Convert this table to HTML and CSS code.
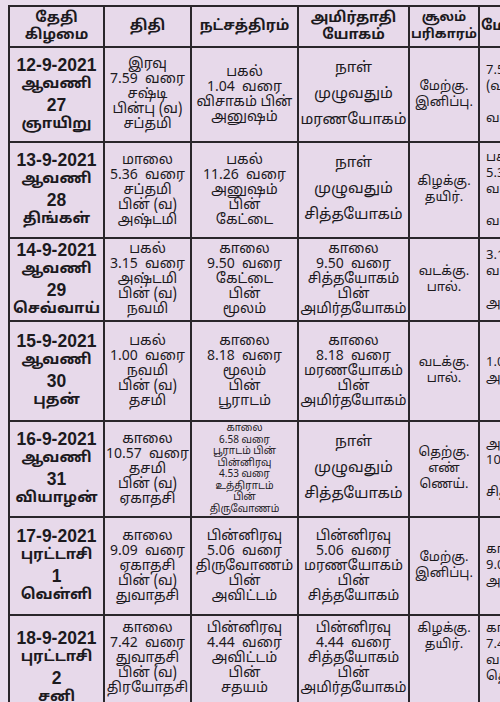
FILE: index.html
```html
<!DOCTYPE html>
<html lang="ta">
<head>
<meta charset="utf-8">
<link rel="stylesheet" href="styles.css">
</head>
<body>
<div class="page">
<table class="cal">
<colgroup>
<col class="c1"><col class="c2"><col class="c3"><col class="c4"><col class="c5"><col class="c6">
</colgroup>
<thead>
<tr class="hd">
<th>தேதி<br>கிழமை</th>
<th>திதி</th>
<th>நட்சத்திரம்</th>
<th>அமிர்தாதி<br>யோகம்</th>
<th class="hsul">சூலம்<br>பரிகாரம்</th>
<th>மேல்நோக்கு</th>
</tr>
</thead>
<tbody>
<tr class="r1">
<td class="date"><div class="dt">12-9-2021</div><div class="dl">ஆவணி</div><div class="dt">27</div><div class="dl">ஞாயிறு</div></td>
<td>இரவு<br>7.59 &nbsp;வரை<br>சஷ்டி<br>பின்பு (வ)<br>சப்தமி</td>
<td>பகல்<br>1.04 &nbsp;வரை<br>விசாகம் பின்<br>அனுஷம்</td>
<td class="yoga">நாள்<br>முழுவதும்<br>மரணயோகம்</td>
<td class="sul">மேற்கு.<br>இனிப்பு.</td>
<td class="last">7.50 வரை<br>(வ)<br><br>வளர்பிறை</td>
</tr>
<tr class="r2">
<td class="date"><div class="dt">13-9-2021</div><div class="dl">ஆவணி</div><div class="dt">28</div><div class="dl">திங்கள்</div></td>
<td>மாலை<br>5.36 &nbsp;வரை<br>சப்தமி<br>பின் (வ)<br>அஷ்டமி</td>
<td>பகல்<br>11.26 &nbsp;வரை<br>அனுஷம்<br>பின்<br>கேட்டை</td>
<td class="yoga">நாள்<br>முழுவதும்<br>சித்தயோகம்</td>
<td class="sul">கிழக்கு.<br>தயிர்.</td>
<td class="last">பகல்<br>5.36 வரை<br>வளர்<br><br>வளர்பிறை</td>
</tr>
<tr class="r3">
<td class="date"><div class="dt">14-9-2021</div><div class="dl">ஆவணி</div><div class="dt">29</div><div class="dl">செவ்வாய்</div></td>
<td>பகல்<br>3.15 &nbsp;வரை<br>அஷ்டமி<br>பின் (வ)<br>நவமி</td>
<td>காலை<br>9.50 &nbsp;வரை<br>கேட்டை<br>பின்<br>மூலம்</td>
<td class="sm">காலை<br>9.50 &nbsp;வரை<br>சித்தயோகம்<br>பின்<br>அமிர்தயோகம்</td>
<td class="sul">வடக்கு.<br>பால்.</td>
<td class="last">3.15 வரை<br>வடக்கு<br><br>அமிர்தம்</td>
</tr>
<tr class="r4">
<td class="date"><div class="dt">15-9-2021</div><div class="dl">ஆவணி</div><div class="dt">30</div><div class="dl">புதன்</div></td>
<td>பகல்<br>1.00 &nbsp;வரை<br>நவமி<br>பின் (வ)<br>தசமி</td>
<td>காலை<br>8.18 &nbsp;வரை<br>மூலம்<br>பின்<br>பூராடம்</td>
<td class="sm">காலை<br>8.18 &nbsp;வரை<br>மரணயோகம்<br>பின்<br>அமிர்தயோகம்</td>
<td class="sul">வடக்கு.<br>பால்.</td>
<td class="last">1.00 வரை<br>அமிர்தம்</td>
</tr>
<tr class="r5">
<td class="date"><div class="dt">16-9-2021</div><div class="dl">ஆவணி</div><div class="dt">31</div><div class="dl">வியாழன்</div></td>
<td>காலை<br>10.57 &nbsp;வரை<br>தசமி<br>பின் (வ)<br>ஏகாதசி</td>
<td class="tiny">காலை<br>6.58 வரை<br>பூராடம் பின்<br>பின்னிரவு<br>4.53 வரை<br>உத்திராடம்<br>பின்<br>திருவோணம்</td>
<td class="yoga">நாள்<br>முழுவதும்<br>சித்தயோகம்</td>
<td class="sul">தெற்கு.<br>எண்<br>ணெய்.</td>
<td class="last">அ<br>10.57 வரை<br><br>சித்தம்</td>
</tr>
<tr class="r6">
<td class="date"><div class="dt">17-9-2021</div><div class="dl">புரட்டாசி</div><div class="dt">1</div><div class="dl">வெள்ளி</div></td>
<td>காலை<br>9.09 &nbsp;வரை<br>ஏகாதசி<br>பின் (வ)<br>துவாதசி</td>
<td>பின்னிரவு<br>5.06 &nbsp;வரை<br>திருவோணம்<br>பின்<br>அவிட்டம்</td>
<td class="sm">பின்னிரவு<br>5.06 &nbsp;வரை<br>மரணயோகம்<br>பின்<br>சித்தயோகம்</td>
<td class="sul">மேற்கு.<br>இனிப்பு.</td>
<td class="last">காலை<br>9.09 வரை<br>அமிர்தம்</td>
</tr>
<tr class="r7">
<td class="date"><div class="dt">18-9-2021</div><div class="dl">புரட்டாசி</div><div class="dt">2</div><div class="dl">சனி</div></td>
<td>காலை<br>7.42 &nbsp;வரை<br>துவாதசி<br>பின் (வ)<br>திரயோதசி</td>
<td>பின்னிரவு<br>4.44 &nbsp;வரை<br>அவிட்டம்<br>பின்<br>சதயம்</td>
<td class="sm">பின்னிரவு<br>4.44 &nbsp;வரை<br>சித்தயோகம்<br>பின்<br>அமிர்தயோகம்</td>
<td class="sul">கிழக்கு.<br>தயிர்.</td>
<td class="last">காலை<br>7.42 வரை<br>வடக்கு<br>தெற்கு</td>
</tr>
</tbody>
</table>
</div>
</body>
</html>
```
FILE: styles.css
```css
html, body {
  margin: 0;
  padding: 0;
  background: #e9dded;
  overflow: hidden;
  width: 500px;
  height: 702px;
}
.page {
  padding: 5px 0 0 8px;
  width: 600px;
}
.cal {
  border-collapse: collapse;
  table-layout: fixed;
  width: 560px;
  font-family: "Noto Sans Tamil", "Lohit Tamil", "Liberation Sans", sans-serif;
  color: #1c1a1e;
  background: #e7d9ea;
}
.c1 { width: 95px; }
.c2 { width: 87px; }
.c3 { width: 107px; }
.c4 { width: 111px; }
.c5 { width: 70px; }
.c6 { width: 90px; }
.cal th, .cal td {
  border: 2px solid #2a262b;
  text-align: center;
  vertical-align: middle;
  padding: 0 1px;
  overflow: hidden;
  white-space: nowrap;
}
.cal th {
  font-size: 14.5px;
  font-weight: 700;
  line-height: 17px;
  height: 39px;
}
.cal th.hsul {
  font-size: 13px;
}
.cal td {
  font-size: 14px;
  line-height: 15px;
}
.r1 td { height: 93px; }
.r2 td { height: 94px; }
.r3 td { height: 81px; }
.r4 td { height: 98px; }
.r5 td { height: 94px; }
.r6 td { height: 96px; }
.r7 td { height: 92px; vertical-align: top; padding-top: 5px; }
.r7 td.date { padding-top: 12px; }
.cal td.date {
  font-weight: 700;
}
.cal td.date .dt {
  font-size: 17.5px;
  line-height: 20px;
  height: 20px;
  font-family: "Liberation Sans", sans-serif;
}
.cal td.date .dl {
  font-size: 15px;
  line-height: 20px;
  height: 20px;
}
.cal td.yoga {
  font-size: 15px;
  line-height: 26px;
}
.cal td.sm {
  font-size: 14px;
  line-height: 15px;
}
.cal td.tiny {
  font-size: 10px;
  line-height: 11.5px;
}
.cal td.sul {
  font-size: 13px;
  line-height: 16px;
}
.cal td.last {
  text-align: left;
  font-size: 13px;
  line-height: 16px;
  padding-left: 6px;
}
```
